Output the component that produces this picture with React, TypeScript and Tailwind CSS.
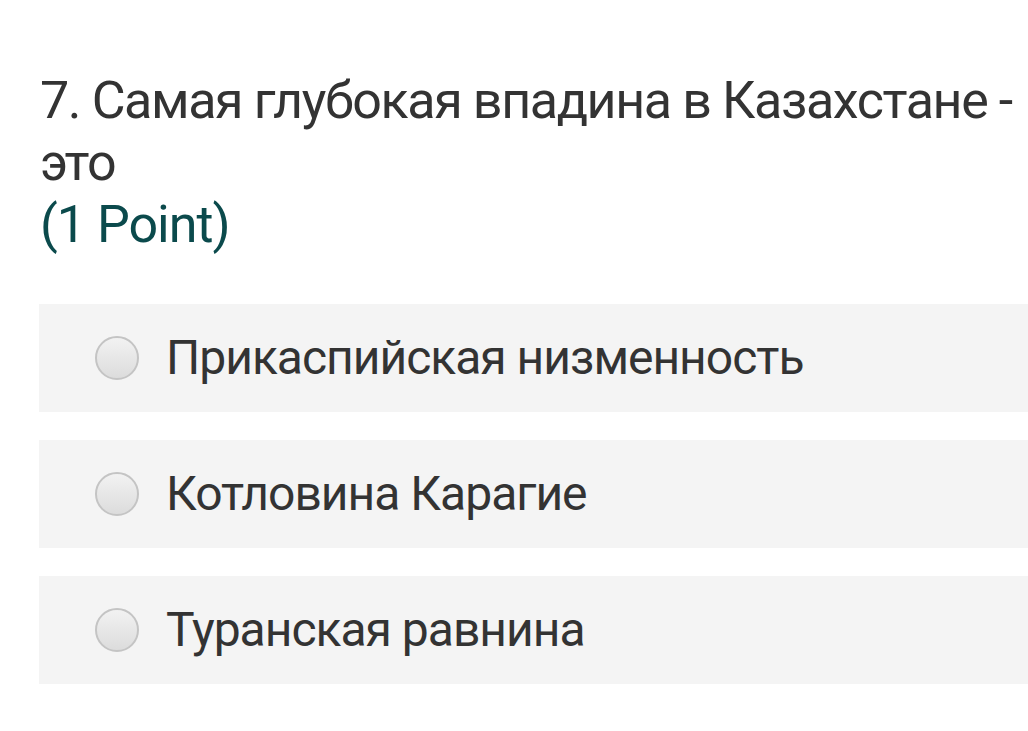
import React from 'react';

const options = ['Прикаспийская низменность', 'Котловина Карагие', 'Туранская равнина'];

const Radio: React.FC = () => (
  <span className="w-[44px] h-[44px] rounded-full border-2 border-[#c4c4c4] bg-gradient-to-b from-[#f2f2f2] to-[#dcdcdc] shrink-0" />
);

export default function App() {
  return (
    <div
      className="w-[1028px] h-[731px] bg-white overflow-hidden"
      style={{ fontFamily: 'Roboto, "Liberation Sans", sans-serif' }}
    >
      <div className="pl-[40px] pt-[70px]">
        <h1 className="text-[52px] leading-[62px] text-[#333333] font-normal tracking-[-1.4px]">
          7. Самая глубокая впадина в Казахстане - это
        </h1>
        <div className="text-[52px] leading-[62px] text-[#0b4a4c] tracking-[-1px]">(1 Point)</div>
      </div>
      <div className="flex flex-col gap-[28px] pl-[39px] mt-[48px]">
        {options.map((o) => (
          <div key={o} className="h-[108px] bg-[#f4f4f4] flex items-center gap-[27px] pl-[56px]">
            <Radio />
            <span className="text-[48px] text-[#333333] tracking-[-1px]">{o}</span>
          </div>
        ))}
      </div>
    </div>
  );
}
